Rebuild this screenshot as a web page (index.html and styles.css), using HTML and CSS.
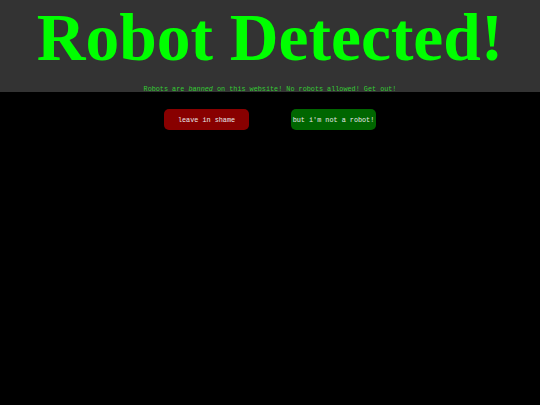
FILE: index.html
```html
<!DOCTYPE html>
<html>
<head>
<meta charset="utf-8">
<link rel="stylesheet" href="styles.css">
</head>
<body>
<header class="top">
  <h1 class="title">Robot Detected!</h1>
  <p class="notice">Robots are <em>banned</em> on this website! No robots allowed! Get out!</p>
</header>
<div class="actions">
  <button class="btn btn-leave">leave in shame</button>
  <button class="btn btn-stay">but i'm not a robot!</button>
</div>
</body>
</html>
```
FILE: styles.css
```css
html, body {
  margin: 0;
  padding: 0;
  background: #000;
  height: 100%;
}
.top {
  background: #333;
  height: 92px;
  overflow: hidden;
  text-align: center;
}
.title {
  margin: 0;
  padding-top: 0;
  font-family: "Liberation Serif", serif;
  font-weight: bold;
  font-size: 67.5px;
  line-height: 76px;
  color: #00ff00;
}
.notice {
  margin: 9px 0 0;
  font-family: "Liberation Mono", monospace;
  font-size: 6.8px;
  line-height: 8px;
  color: #33cc33;
}
.actions {
  display: flex;
  justify-content: center;
  gap: 42px;
  padding-top: 17px;
}
.btn {
  width: 85px;
  height: 21px;
  padding: 0;
  border: none;
  border-radius: 5px;
  font-family: "Liberation Mono", monospace;
  font-size: 6.8px;
  color: #e8e8e8;
}
.btn-leave {
  background: #880000;
}
.btn-stay {
  background: #006600;
}
```
